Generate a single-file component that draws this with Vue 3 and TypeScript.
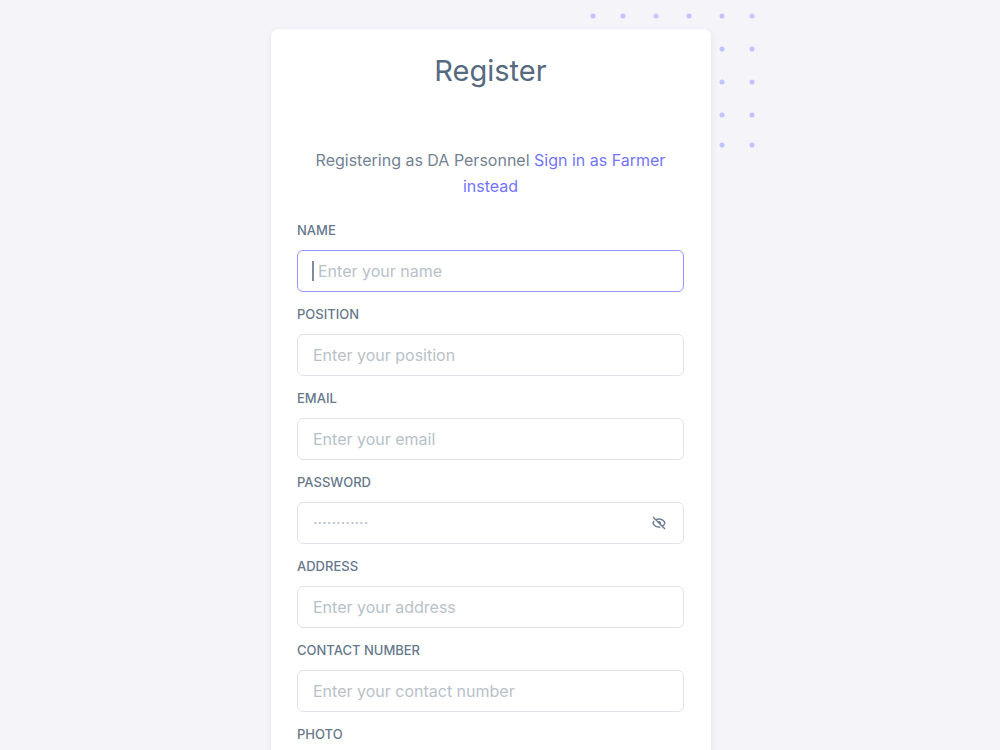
<script setup lang="ts">
interface Field {
  id: string
  label: string
  type: string
  placeholder?: string
  active?: boolean
}

const fields: Field[] = [
  { id: 'name', label: 'Name', type: 'text', placeholder: 'Enter your name', active: true },
  { id: 'position', label: 'Position', type: 'text', placeholder: 'Enter your position' },
  { id: 'email', label: 'Email', type: 'email', placeholder: 'Enter your email' },
  { id: 'password', label: 'Password', type: 'password', placeholder: '············' },
  { id: 'address', label: 'Address', type: 'text', placeholder: 'Enter your address' },
  { id: 'contact', label: 'Contact Number', type: 'text', placeholder: 'Enter your contact number' },
  { id: 'photo', label: 'Photo', type: 'file' },
]

const dotColumns = [6, 36, 69, 102, 135, 165]
const dotRows = [6, 39, 72, 105, 135]
</script>

<template>
  <main class="page">
    <div class="wrap">
      <svg class="dots" width="171" height="141" viewBox="0 0 171 141" aria-hidden="true">
        <template v-for="y in dotRows" :key="y">
          <circle v-for="x in dotColumns" :key="x" :cx="x" :cy="y" r="2.5" />
        </template>
      </svg>
      <section class="card">
        <h1 class="title">Register</h1>
        <p class="intro">
          Registering as DA Personnel <a href="#farmer">Sign in as Farmer instead</a>
        </p>
        <form class="form">
          <div v-for="f in fields" :key="f.id" class="field">
            <label class="label" :for="f.id">{{ f.label }}</label>
            <div class="control" :class="{ active: f.active }">
              <input :id="f.id" class="input" :type="f.type" :placeholder="f.placeholder" />
              <span v-if="f.active" class="caret"></span>
              <button v-if="f.type === 'password'" class="toggle" type="button" aria-label="Show password">
                <svg width="16" height="16" viewBox="0 0 24 24" aria-hidden="true">
                  <path
                    d="M12 19c.946 0 1.81-.103 2.598-.281l-1.757-1.757c-.273.021-.55.038-.841.038-5.351 0-7.424-3.846-7.926-5a8.642 8.642 0 0 1 1.508-2.297L4.184 8.305c-1.538 1.667-2.121 3.346-2.132 3.379a.994.994 0 0 0 0 .633C2.073 12.383 4.367 19 12 19zm0-14c-1.837 0-3.346.396-4.604.981L3.707 2.293 2.293 3.707l18 18 1.414-1.414-3.319-3.319c2.614-1.951 3.547-4.615 3.561-4.657a.994.994 0 0 0 0-.633C21.927 11.617 19.633 5 12 5zm4.972 10.558-2.28-2.28c.19-.39.308-.819.308-1.278 0-1.641-1.359-3-3-3-.459 0-.888.118-1.277.309L8.915 7.501A9.26 9.26 0 0 1 12 7c5.351 0 7.424 3.846 7.926 5-.302.692-1.166 2.342-2.954 3.558z"
                  />
                </svg>
              </button>
            </div>
          </div>
        </form>
      </section>
    </div>
  </main>
</template>

<style>
body {
  background: #f4f4f9;
}
</style>

<style scoped>
* {
  box-sizing: border-box;
}

.page {
  display: flex;
  justify-content: center;
  padding: 29px 18px 29px 0;
  font-family: Inter, 'Liberation Sans', sans-serif;
  font-size: 16px;
  color: #738293;
}

.wrap {
  position: relative;
  width: 100%;
  max-width: 440px;
}

.dots {
  position: absolute;
  top: -19px;
  right: -47px;
  fill: #c3c4ff;
}

.card {
  position: relative;
  padding: 24px 27px 26px 26px;
  background: #fff;
  border-radius: 8px;
  box-shadow: 0 2px 6px rgba(67, 89, 113, 0.1);
}

.title {
  margin: 0;
  font-size: 29px;
  font-weight: 400;
  line-height: 36px;
  text-align: center;
  color: #566a7f;
}

.intro {
  margin: 58px 0 21px;
  line-height: 26px;
  text-align: center;
}

.intro a {
  color: #7375ff;
  text-decoration: none;
}

.form {
  display: grid;
  gap: 12px;
}

.label {
  display: block;
  margin-bottom: 10px;
  font-size: 13px;
  font-weight: 500;
  line-height: 20px;
  text-transform: uppercase;
  color: #66788b;
}

.control {
  position: relative;
  display: flex;
  align-items: center;
  height: 42px;
  border: 1px solid #dfe3e7;
  border-radius: 6px;
}

.control.active {
  border-color: #9496ff;
}

.input {
  flex: 1;
  min-width: 0;
  height: 100%;
  padding: 0 15px;
  border: 0;
  outline: 0;
  background: transparent;
  font: inherit;
  color: #697a8d;
}

.input::placeholder {
  color: #b8c1c9;
  opacity: 1;
}

.active .input {
  padding-left: 20px;
}

.caret {
  position: absolute;
  left: 14px;
  width: 2px;
  height: 20px;
  background: #7d8c9d;
}

.toggle {
  display: flex;
  margin-right: 16px;
  padding: 0;
  border: 0;
  background: none;
  fill: #697a8d;
  cursor: pointer;
}
</style>
